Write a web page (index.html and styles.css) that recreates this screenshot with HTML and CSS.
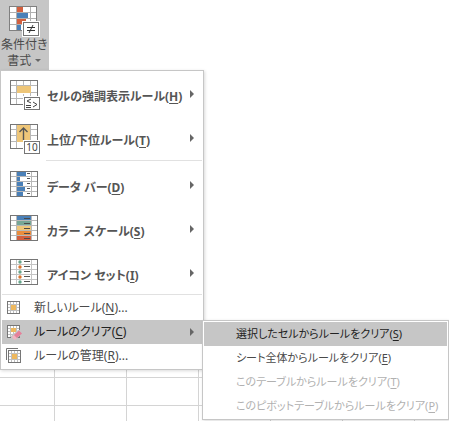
FILE: index.html
```
<!DOCTYPE html>
<html lang="ja">
<head>
  <meta charset="UTF-8" />
  <title>条件付き書式</title>
  <link rel="stylesheet" href="styles.css">
</head>
<body>
  <button class="trigger" type="button" aria-haspopup="menu" aria-expanded="true">
    <svg class="icon" viewBox="0 0 32 32" aria-hidden="true">
      <rect x="1.5" y="1.5" width="27" height="24" fill="#fff" stroke="#808080"/>
      <path d="M8.500 2v23M22.500 2v23M2 7.500h26M2 13.500h26M2 19.500h26" stroke="#b0b0b0"/>
      <path d="M9 2h6v5H9zM9 14h9v5H9z" fill="#d3603f"/>
      <path d="M9 8h11v5H9zM9 20h4v5H9z" fill="#4a80b8"/>
      <rect x="14" y="16" width="18" height="16" fill="#fff"/>
      <rect x="15.500" y="17.500" width="15" height="13" fill="#fff" stroke="#767676"/>
      <path d="M19 22.500h8M19 25.500h8M25 20l-4 8" stroke="#333"/>
    </svg>
    <span>条件付き</span>
    <span>書式<i class="caret"></i></span>
  </button>

  <ul class="menu" role="menu">
    <li>
      <button class="item large" type="button" role="menuitem">
        <svg class="icon" viewBox="0 0 32 32" aria-hidden="true">
          <rect x=".5" y=".5" width="27" height="24" fill="#fff" stroke="#767676"/>
          <path d="M6.500 1v23M20.500 1v23M13.500 1v4M13.500 14v10M1 5.500h26M1 12.500h26M1 18.500h26" stroke="#b8b8b8"/>
          <rect x="7" y="6" width="14" height="7" fill="#eec679"/>
          <rect x="13" y="16" width="18" height="15" fill="#fff"/>
          <rect x="14.500" y="17.500" width="15" height="12" fill="#fff" stroke="#767676"/>
          <path d="M21 19l-4 2 4 2M16 25.500h5M16 27.500h5M23 22l4 2.500-4 2.500" fill="none" stroke="#444"/>
        </svg>
        <span>セルの強調表示ルール(<u>H</u>)</span>
        <i class="arrow"></i>
      </button>
    </li>
    <li>
      <button class="item large" type="button" role="menuitem">
        <svg class="icon" viewBox="0 0 32 32" aria-hidden="true">
          <rect x=".5" y=".5" width="27" height="24" fill="#fff" stroke="#767676"/>
          <path d="M6.500 1v23M20.500 1v23M1 5.500h26M1 11.500h26M1 17.500h26" stroke="#b8b8b8"/>
          <rect x="7" y="1" width="13" height="17" fill="#eec679"/>
          <path d="M13.500 16V4M9.500 8l4-4 4 4" fill="none" stroke="#555" stroke-width="1.400"/>
          <rect x="13" y="16" width="18" height="15" fill="#fff"/>
          <rect x="14.500" y="17.500" width="15" height="12" fill="#fff" stroke="#767676"/>
          <text class="badge-text" x="22" y="27" text-anchor="middle">10</text>
        </svg>
        <span>上位/下位ルール(<u>T</u>)</span>
        <i class="arrow"></i>
      </button>
    </li>
    <li class="divider indent" role="separator"></li>
    <li>
      <button class="item large" type="button" role="menuitem">
        <svg class="icon" viewBox="0 0 32 32" aria-hidden="true">
          <rect x=".5" y=".5" width="27" height="25" fill="#fff" stroke="#767676"/>
          <path d="M6.500 1v24M21.500 1v24M1 5.500h26M1 10.500h26M1 15.500h26M1 20.500h26" stroke="#b8b8b8"/>
          <path d="M7 1h9v4H7zM7 6h3v4H7zM7 11h6v4H7zM7 16h8v4H7zM7 21h6v4H7z" fill="#4a80b8"/>
          <path d="M17 2.500h3M17 7.500h3M17 12.500h3M17 17.500h3M17 22.500h3" stroke="#555"/>
        </svg>
        <span>データ バー(<u>D</u>)</span>
        <i class="arrow"></i>
      </button>
    </li>
    <li>
      <button class="item large" type="button" role="menuitem">
        <svg class="icon" viewBox="0 0 32 32" aria-hidden="true">
          <rect x=".5" y=".5" width="27" height="25" fill="#fff" stroke="#767676"/>
          <path d="M6.500 1v24M21.500 1v24M1 5.500h26M1 10.500h26M1 15.500h26M1 20.500h26" stroke="#b8b8b8"/>
          <rect x="7" y="1" width="14" height="4" fill="#4a80b8"/>
          <rect x="7" y="6" width="14" height="4" fill="#76a797"/>
          <rect x="7" y="11" width="14" height="4" fill="#eec679"/>
          <rect x="7" y="16" width="14" height="4" fill="#e98d3e"/>
          <rect x="7" y="21" width="14" height="4" fill="#d3603f"/>
          <path d="M14 3.500h6M14 8.500h6M14 13.500h6M14 18.500h6M14 23.500h6" stroke="#4a4a4a"/>
        </svg>
        <span>カラー スケール(<u>S</u>)</span>
        <i class="arrow"></i>
      </button>
    </li>
    <li>
      <button class="item large" type="button" role="menuitem">
        <svg class="icon" viewBox="0 0 32 32" aria-hidden="true">
          <rect x=".5" y=".5" width="27" height="25" fill="#fff" stroke="#767676"/>
          <path d="M6.500 1v24M21.500 1v24M1 5.500h26M1 10.500h26M1 15.500h26M1 20.500h26" stroke="#c4c4c4"/>
          <path d="M14 2.500h6M14 7.500h6M14 12.500h6M14 17.500h6M14 22.500h6" stroke="#555"/>
          <g fill="#68a58c">
            <circle cx="10" cy="3" r="1.700"/><circle cx="10" cy="13" r="1.700"/><circle cx="10" cy="23" r="1.700"/>
          </g>
          <g fill="#d9752f">
            <circle cx="10" cy="8" r="1.700"/><circle cx="10" cy="18" r="1.700"/>
          </g>
        </svg>
        <span>アイコン セット(<u>I</u>)</span>
        <i class="arrow"></i>
      </button>
    </li>
    <li class="divider" role="separator"></li>
    <li>
      <button class="item" type="button" role="menuitem">
        <svg class="icon" viewBox="0 0 16 16" aria-hidden="true">
          <rect x="1.500" y="1.500" width="12" height="12" fill="#fff" stroke="#767676"/>
          <path d="M4.500 2v11M7.500 2v11M10.500 2v11M2 4.500h11M2 7.500h11M2 10.500h11" stroke="#c0c0c0"/>
          <rect x="5" y="5" width="5" height="5" fill="#eeb85e"/>
        </svg>
        <span>新しいルール(<u>N</u>)...</span>
      </button>
    </li>
    <li class="parent">
      <button class="item active" type="button" role="menuitem" aria-haspopup="menu" aria-expanded="true">
        <svg class="icon" viewBox="0 0 16 16" aria-hidden="true">
          <rect x="1.500" y="1.500" width="12" height="12" fill="#fff" stroke="#767676"/>
          <path d="M4.500 2v11M7.500 2v11M10.500 2v11M2 4.500h11M2 7.500h11M2 10.500h11" stroke="#c0c0c0"/>
          <rect x="5" y="4" width="5" height="4" fill="#eeb85e"/>
          <path d="M5 12l7-6h4v4l-7 6H5z" fill="#c6c6c6"/>
          <path d="M6 13l2-2 3 3-1.500 1.500H8z" fill="#f3b5c2"/>
          <path d="M8 11l5-4.500 3 3L11 14z" fill="#e6809a"/>
        </svg>
        <span>ルールのクリア(<u>C</u>)</span>
        <i class="arrow"></i>
      </button>
      <ul class="menu submenu" role="menu">
        <li><button class="item active" type="button" role="menuitem"><span>選択したセルからルールをクリア(<u>S</u>)</span></button></li>
        <li><button class="item" type="button" role="menuitem"><span>シート全体からルールをクリア(<u>E</u>)</span></button></li>
        <li><button class="item" type="button" role="menuitem" disabled><span>このテーブルからルールをクリア(<u>T</u>)</span></button></li>
        <li><button class="item" type="button" role="menuitem" disabled><span>このピボットテーブルからルールをクリア(<u>P</u>)</span></button></li>
      </ul>
    </li>
    <li>
      <button class="item" type="button" role="menuitem">
        <svg class="icon" viewBox="0 0 16 16" aria-hidden="true">
          <path d="M.5 12V.5H12" fill="none" stroke="#767676"/>
          <rect x="2.500" y="2.500" width="12" height="12" fill="#fff" stroke="#767676"/>
          <path d="M5.500 3v11M8.500 3v11M11.500 3v11M3 5.500h11M3 8.500h11M3 11.500h11" stroke="#c0c0c0"/>
          <rect x="6" y="6" width="5" height="5" fill="#eeb85e"/>
        </svg>
        <span>ルールの管理(<u>R</u>)...</span>
      </button>
    </li>
  </ul>

  <div class="sheet"></div>
</body>
</html>
```

FILE: styles.css
```
* {
  box-sizing: border-box;
}

body {
  display: flex;
  flex-direction: column;
  align-items: flex-start;
  min-height: 100vh;
  margin: 0;
  background: #fff;
  color: #4a4a4a;
  font: 12px/16px "Noto Sans", "Noto Sans CJK JP", sans-serif;
  font-feature-settings: "palt";
}

button {
  border: 0;
  color: inherit;
  font: inherit;
  font-feature-settings: inherit;
}

u {
  text-underline-offset: 2px;
}

.trigger {
  display: flex;
  flex-direction: column;
  align-items: center;
  height: 70px;
  padding: 5px 1px 0;
  background: #c6c6c6;
}

.trigger .icon {
  width: 32px;
  height: 32px;
}

.trigger span {
  white-space: nowrap;
}

.caret {
  display: inline-block;
  margin-left: 4px;
  border: 3px solid transparent;
  border-top-color: #666;
  border-bottom: 0;
  vertical-align: 3px;
}

.menu {
  z-index: 1;
  min-width: 204px;
  margin: 0;
  padding: 0 1px 1px;
  border: 1px solid #c6c6c6;
  background: #fff;
  box-shadow: 1px 1px 3px rgba(0, 0, 0, 0.15);
  list-style: none;
}

.item {
  display: flex;
  align-items: center;
  width: 100%;
  height: 24px;
  padding: 0 8px 0 4px;
  background: none;
  text-align: left;
  white-space: nowrap;
}

.item .icon {
  flex: none;
  width: 16px;
  height: 16px;
  margin-right: 12px;
}

.item.large {
  height: 44px;
  padding: 9px 8px 3px 8px;
  color: #555;
  font-weight: bold;
}

.item.large .icon {
  width: 32px;
  height: 32px;
  margin-right: 5px;
}

.item.large span {
  padding-top: 2px;
}

.item.active {
  background: #c6c6c6;
  color: #222;
}

.item:disabled {
  color: #b1b1b1;
}

.arrow {
  margin-left: auto;
  border: 4px solid transparent;
  border-left: 4px solid #666;
  border-right: 0;
}

.large .arrow {
  margin-bottom: 5px;
}

.badge-text {
  fill: #444;
  font-size: 10px;
  font-weight: normal;
}

.divider {
  height: 2px;
  border-top: 1px solid #e1e1e1;
}

.divider.indent {
  height: 3px;
  margin-left: 44px;
  border-top: 0;
  background: linear-gradient(#e1e1e1, #e1e1e1) 0 1px / 100% 1px no-repeat;
}

.parent {
  position: relative;
}

.submenu {
  position: absolute;
  top: 0;
  left: 100%;
  min-width: 247px;
  padding: 1px;
  font-size: 11px;
}

.submenu .item {
  padding: 0 4px 0 32px;
}

/* cell grid of the worksheet under the menu */
.sheet {
  flex: 1;
  width: 100%;
  background:
    repeating-linear-gradient(to right, transparent 0 54px, #d4d4d4 54px 55px, transparent 55px 72px),
    repeating-linear-gradient(to bottom, transparent 0 7px, #d4d4d4 7px 8px, transparent 8px 28px);
}
```
